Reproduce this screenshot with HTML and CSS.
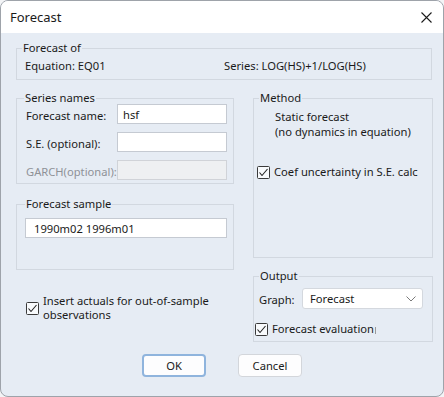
FILE: index.html
```html
<!DOCTYPE html>
<html lang="en">
<head>
    <meta charset="UTF-8">
    <title>Forecast</title>
    <link rel="stylesheet" href="styles.css">
</head>
<body>
    <div class="dialog">
        <div class="titlebar">
            <span class="title">Forecast</span>
            <span class="close">
                <svg width="11" height="11" viewBox="0 0 11 11"><path d="M0.5 0.5 L10.5 10.5 M10.5 0.5 L0.5 10.5" stroke="#1b1b1b" stroke-width="1.1" fill="none"/></svg>
            </span>
        </div>

        <div class="content">
            <fieldset class="group group-of">
                <legend>Forecast of</legend>
                <div class="of-row">
                    <span class="eq">Equation: EQ01</span>
                    <span>Series: LOG(HS)+1/LOG(HS)</span>
                </div>
            </fieldset>

            <div class="columns">
                <div class="col">
                    <fieldset class="group names">
                        <legend>Series names</legend>
                        <div class="name-grid">
                            <label>Forecast name:</label>
                            <input class="field" type="text" value="hsf">
                            <label>S.E. (optional):</label>
                            <input class="field" type="text" value="">
                            <label class="disabled">GARCH(optional):</label>
                            <input class="field" type="text" value="" disabled>
                        </div>
                    </fieldset>

                    <fieldset class="group sample">
                        <legend>Forecast sample</legend>
                        <input class="field wide" type="text" value="1990m02 1996m01">
                    </fieldset>

                    <div class="check insert">
                        <span class="box"><svg width="13" height="13" viewBox="0 0 13 13"><rect x="0.5" y="0.5" width="12" height="12" rx="1" fill="#f8fafc" stroke="#3a3a3a"/><path d="M2.5 6.5 L5 9.5 L10.5 3" stroke="#222" stroke-width="1.1" fill="none"/></svg></span>
                        <span>Insert actuals for out-of-sample<br>observations</span>
                    </div>
                </div>

                <div class="col">
                    <fieldset class="group method">
                        <legend>Method</legend>
                        <p class="static">Static forecast<br>(no dynamics in equation)</p>
                        <div class="check coef">
                            <span class="box"><svg width="13" height="13" viewBox="0 0 13 13"><rect x="0.5" y="0.5" width="12" height="12" rx="1" fill="#f8fafc" stroke="#3a3a3a"/><path d="M2.5 6.5 L5 9.5 L10.5 3" stroke="#222" stroke-width="1.1" fill="none"/></svg></span>
                            <span>Coef uncertainty in S.E. calc</span>
                        </div>
                    </fieldset>

                    <fieldset class="group output">
                        <legend>Output</legend>
                        <div class="graph-row">
                            <label>Graph:</label>
                            <div class="select">
                                <span>Forecast</span>
                                <svg width="10" height="6" viewBox="0 0 10 6"><path d="M0.5 0.5 L5 5 L9.5 0.5" stroke="#7a7a7a" stroke-width="1" fill="none"/></svg>
                            </div>
                        </div>
                        <div class="check evalrow">
                            <span class="box"><svg width="13" height="13" viewBox="0 0 13 13"><rect x="0.5" y="0.5" width="12" height="12" rx="1" fill="#f8fafc" stroke="#3a3a3a"/><path d="M2.5 6.5 L5 9.5 L10.5 3" stroke="#222" stroke-width="1.1" fill="none"/></svg></span>
                            <span>Forecast evaluation</span>
                            <span class="tick"></span>
                        </div>
                    </fieldset>
                </div>
            </div>

            <div class="buttons">
                <button class="btn default">OK</button>
                <button class="btn">Cancel</button>
            </div>
        </div>
    </div>
</body>
</html>
```

FILE: styles.css
```css
* {
    margin: 0;
    padding: 0;
    box-sizing: border-box;
}

body {
    background: #f3f4f6;
    font-family: 'Noto Sans', 'Open Sans', sans-serif;
    font-size: 11.2px;
    color: #1a1a1a;
}

.dialog {
    width: 444px;
    height: 397px;
    background: #e6ecf4;
    border: 1px solid #9ea3aa;
    border-radius: 8px;
    overflow: hidden;
}

.titlebar {
    height: 32px;
    background: #ffffff;
    display: flex;
    align-items: center;
    justify-content: space-between;
    padding: 0 11px 0 9px;
}

.title {
    font-size: 13px;
    color: #1a1a1a;
}

.close {
    display: flex;
}

.content {
    padding: 0 11px 0 15px;
}

/* group boxes */
.group {
    border: 1px solid #d2d8e0;
    min-width: 0;
}

.group legend {
    line-height: 12px;
    padding: 0 1px;
}

.group-of {
    margin-top: 9px;
    padding: 4px 8px 5px 8px;
}

.group-of legend {
    margin-left: -3px;
}

.of-row {
    display: flex;
    line-height: 16px;
}

.of-row .eq {
    width: 199px;
}

.columns {
    display: grid;
    grid-template-columns: 218px 180px;
    column-gap: 19px;
    margin-top: 12px;
}

.col {
    display: flex;
    flex-direction: column;
}

.names {
    padding: 0 6px 3px 9px;
}

.names legend {
    margin-left: -2px;
}

.name-grid {
    display: grid;
    grid-template-columns: 91px 110px;
    grid-auto-rows: 20px;
    row-gap: 8px;
    align-items: center;
}

.name-grid label {
    line-height: 16px;
    padding-top: 3px;
    white-space: nowrap;
}

.disabled {
    color: #8e9197;
}

.field {
    height: 20px;
    border: 1px solid #c5cad2;
    background: #ffffff;
    font-family: inherit;
    font-size: 11.2px;
    color: #1a1a1a;
    padding: 0 5px;
    outline: none;
}

.field:disabled {
    background: #eef0f2;
    border-color: #d0d3d8;
}

.sample {
    margin-top: 14px;
    padding: 8px 6px 31px 8px;
}

.sample legend {
    margin-left: 0;
}

.field.wide {
    width: 202px;
    padding: 0 8px;
}

.check {
    display: flex;
    align-items: center;
    gap: 4px;
    line-height: 16px;
    white-space: nowrap;
}

.box {
    display: flex;
}

.insert {
    margin-top: 24px;
    padding-left: 10px;
    line-height: 14px;
}

.method {
    padding: 5px 6px 77px 3px;
}

.method legend,
.output legend {
    margin-left: 2px;
}

.static {
    margin-left: 18px;
    line-height: 15px;
}

.coef {
    margin-top: 25px;
    margin-left: 0;
}

.output {
    margin-top: 12px;
    padding: 6px 6px 4px 3px;
}

.graph-row {
    display: flex;
    align-items: center;
    height: 21px;
}

.graph-row label {
    width: 45px;
    padding-left: 2px;
    padding-top: 2px;
}

.select {
    width: 121px;
    height: 21px;
    background: #ffffff;
    border: 1px solid #d4d8de;
    border-radius: 3px;
    display: flex;
    align-items: center;
    justify-content: space-between;
    padding: 0 6px 0 7px;
}

.evalrow {
    margin-top: 12px;
    margin-left: -2px;
}

.tick {
    width: 1px;
    height: 7px;
    background: #9a9a9a;
    margin-left: -3px;
    margin-top: 3px;
}

.buttons {
    display: flex;
    justify-content: center;
    gap: 32px;
    margin-top: 12px;
    padding-right: 4px;
}

.btn {
    width: 64px;
    height: 23px;
    background: #fdfdfe;
    border: 1px solid #d3d6db;
    border-radius: 4px;
    font-family: inherit;
    font-size: 11.2px;
    color: #1a1a1a;
}

.btn.default {
    border: 2px solid #8fb4dd;
}
```
